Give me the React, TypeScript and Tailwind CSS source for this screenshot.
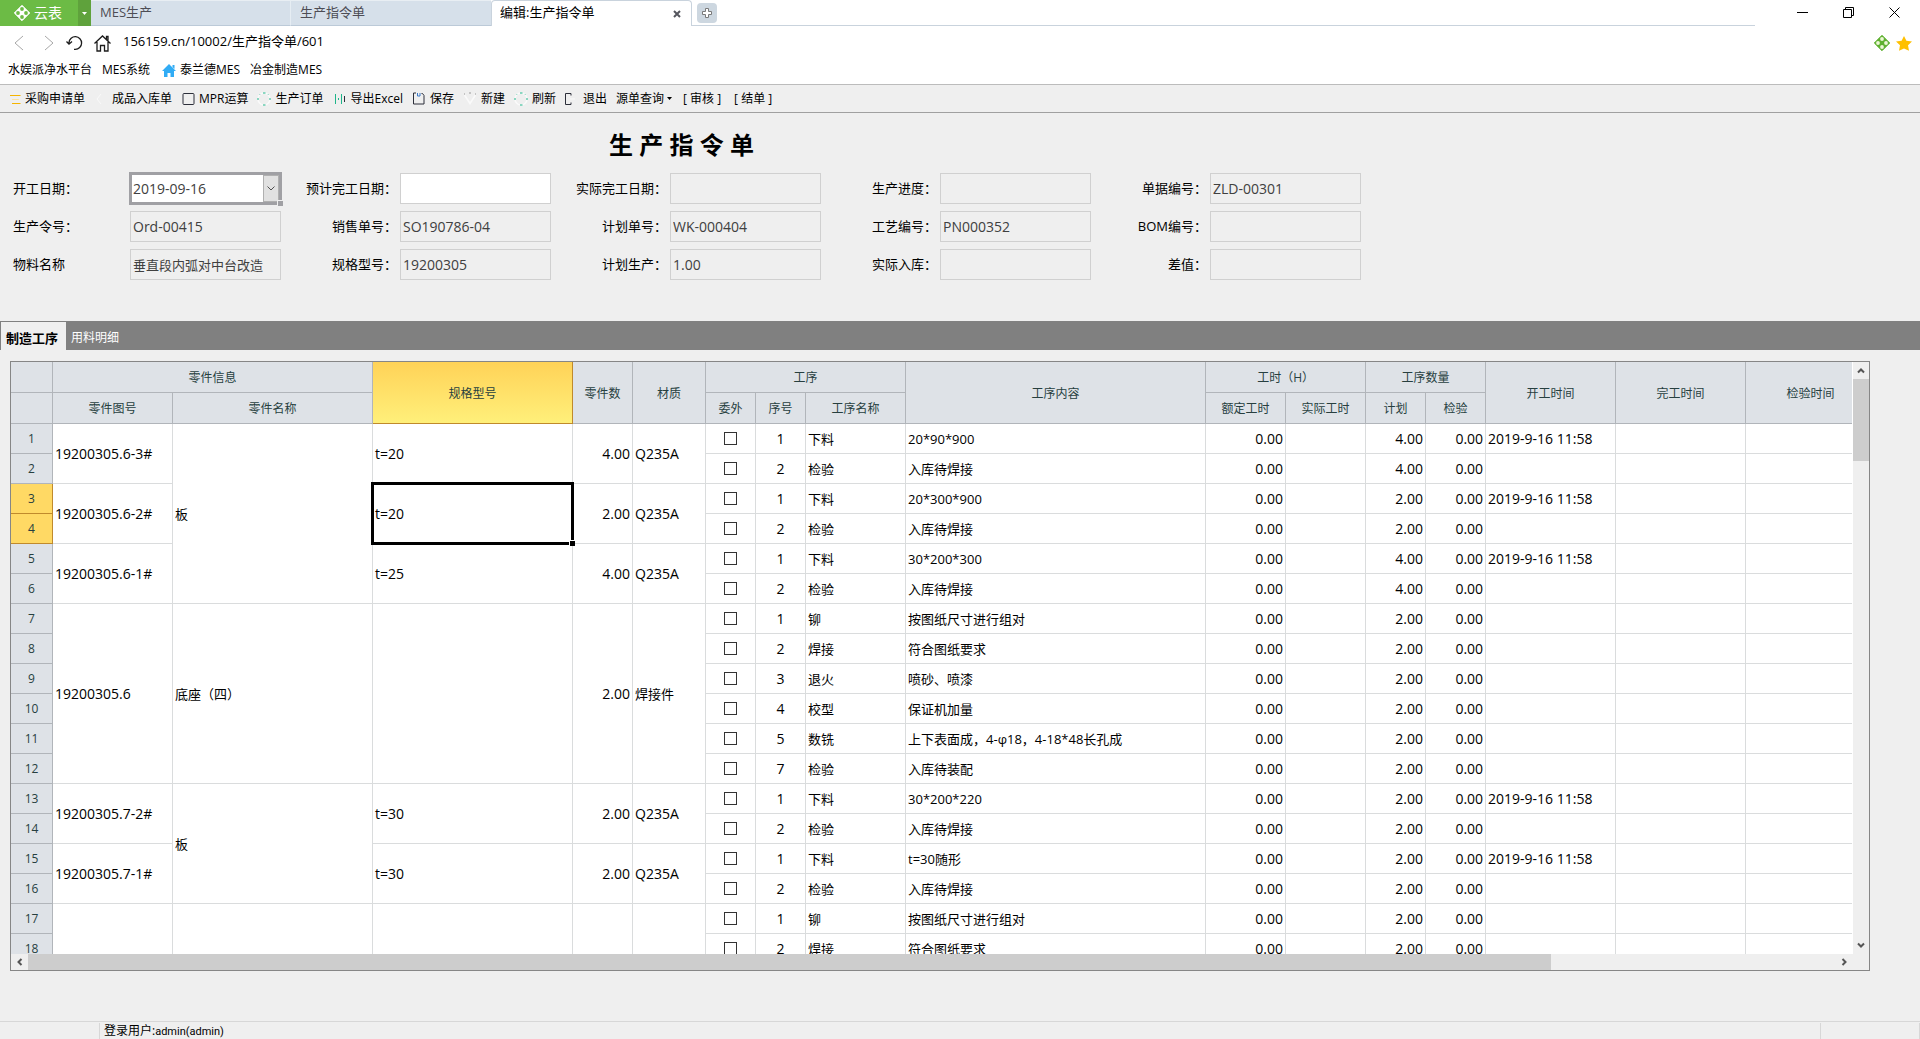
import React from "react";

const FONT = "font-['Open_Sans','Noto_Sans_CJK_SC',sans-serif]";

function Clover({ size, stroke, fill }: { size: number; stroke: string; fill: string }) {
  return (
    <svg width={size} height={size} viewBox="0 0 16 16" aria-hidden="true">
      <path d="M8 0.3 15.7 8 8 15.7 0.3 8Z" fill={stroke} stroke={stroke} strokeLinejoin="round" />
      <circle cx="8" cy="4" r="1.9" fill={fill} />
      <circle cx="4" cy="8" r="1.9" fill={fill} />
      <circle cx="12" cy="8" r="1.9" fill={fill} />
      <circle cx="8" cy="12" r="1.9" fill={fill} />
    </svg>
  );
}

function TabBar() {
  return (
    <header className="flex h-[26px] items-stretch bg-white">
      <button className="flex w-[78px] items-center gap-1 bg-[#6cbb45] pl-3.5 text-[14px] leading-none text-white">
        <Clover size={16} stroke="#ffffff" fill="#6cbb45" />
        云表
      </button>
      <button aria-label="菜单" className="flex w-[13px] items-center justify-center bg-[#5fa23c]">
        <svg width="5" height="3" viewBox="0 0 5 3" aria-hidden="true">
          <path d="M0 0H5L2.5 3Z" fill="#fff" />
        </svg>
      </button>
      <nav className="flex flex-1 items-stretch text-[13px] leading-none">
        <button className="w-[200px] border-r border-t border-b border-r-[#e6edf3] border-t-[#e8eef3] border-b-[#bccad8] bg-[#d6e0ea] pb-0.5 pl-[9px] text-left text-[#4d4d55]">
          MES生产
        </button>
        <button className="w-[200px] border-t border-b border-t-[#e8eef3] border-b-[#bccad8] bg-[#d6e0ea] pb-0.5 pl-[9px] text-left text-[#4d4d55]">
          生产指令单
        </button>
        <div className="flex w-[201px] items-center justify-between rounded-t-sm border-x border-t border-[#c9d3dd] bg-white pl-2 pr-2.5">
          <button className="pb-0.5 text-black">编辑:生产指令单</button>
          <button aria-label="关闭标签">
            <svg width="8" height="8" viewBox="0 0 8 8" aria-hidden="true">
              <path d="M1 1 7 7M7 1 1 7" stroke="#55565e" strokeWidth="2" />
            </svg>
          </button>
        </div>
        <div className="flex w-[1063px] min-w-0 items-center border-b border-[#c9d3dd] pl-[5px]">
          <button aria-label="新建标签" className="flex h-[20px] w-[20px] items-center justify-center rounded-sm bg-[#cdd7e0]">
            <svg width="12" height="12" viewBox="0 0 12 12" aria-hidden="true">
              <path d="M4.5 1.5h3v3h3v3h-3v3h-3v-3h-3v-3h3Z" fill="#fff" stroke="#7a7a7a" />
            </svg>
          </button>
        </div>
      </nav>
      <div className="flex items-center gap-[35px] pb-0.5 pr-5">
        <button aria-label="最小化">
          <svg width="11" height="11" viewBox="0 0 11 11" aria-hidden="true">
            <path d="M0 5.5H11" stroke="#000" />
          </svg>
        </button>
        <button aria-label="还原">
          <svg width="11" height="11" viewBox="0 0 11 11" aria-hidden="true">
            <path d="M0.5 2.5H8.5V10.5H0.5ZM2.5 2.5V0.5H10.5V8.5H8.5" fill="none" stroke="#000" />
          </svg>
        </button>
        <button aria-label="关闭">
          <svg width="11" height="11" viewBox="0 0 11 11" aria-hidden="true">
            <path d="M0.5 0.5 10.5 10.5M10.5 0.5 0.5 10.5" stroke="#000" />
          </svg>
        </button>
      </div>
    </header>
  );
}

function AddressBar() {
  return (
    <div className="flex h-[34px] items-center bg-white pl-3.5 pr-2">
      <div className="flex items-center">
        <button aria-label="后退" className="w-[26px]">
          <svg width="10" height="16" viewBox="0 0 10 16" aria-hidden="true">
            <path d="M9 1 1 8 9 15" fill="none" stroke="#a8a8a8" />
          </svg>
        </button>
        <button aria-label="前进" className="flex w-[26px] pl-1">
          <svg width="10" height="16" viewBox="0 0 10 16" aria-hidden="true">
            <path d="M1 1 9 8 1 15" fill="none" stroke="#a8a8a8" />
          </svg>
        </button>
        <button aria-label="刷新页面" className="w-[28px]">
          <svg width="17" height="16" viewBox="0 0 17 16" aria-hidden="true">
            <path d="M3 8.5V7.5a6.3 6.3 0 1 1 6.3 6.8H8M0.5 6.5 3 9.2 6 6.5" fill="none" stroke="#1c1c1c" strokeWidth="1.3" />
          </svg>
        </button>
        <button aria-label="主页">
          <svg width="17" height="17" viewBox="0 0 17 17" aria-hidden="true">
            <path d="M0.5 8.5 8.5 1l8 7.5M3 7v9h3.5v-5.5h4V16H14V7M12.5 4V1.5h1.5V5.5" fill="none" stroke="#1c1c1c" strokeWidth="1.3" />
          </svg>
        </button>
      </div>
      <input
        aria-label="地址"
        defaultValue="156159.cn/10002/生产指令单/601"
        className="ml-3 min-w-0 flex-1 bg-transparent pb-0.5 text-[13px] text-black outline-none"
      />
      <div className="flex items-center gap-1.5">
        <button aria-label="云表平台">
          <Clover size={16} stroke="#5fb131" fill="#eef7d8" />
        </button>
        <button aria-label="收藏">
          <svg width="16" height="15" viewBox="0 0 16 15" aria-hidden="true">
            <path d="M8 0 10.4 4.8 16 5.5 12 9.3 13 14.8 8 12.4 3 14.8 4 9.3 0 5.5 5.6 4.8Z" fill="#ffc000" />
          </svg>
        </button>
      </div>
    </div>
  );
}

function Bookmarks() {
  return (
    <nav className="flex h-[24px] items-start gap-2.5 bg-white pl-2 text-[12px] leading-5 text-black">
      <a href="#water">水娱派净水平台</a>
      <a href="#mes">MES系统</a>
      <a href="#tld" className="flex items-center gap-1">
        <svg width="16" height="13" viewBox="0 0 16 13" aria-hidden="true">
          <path d="M9 0 16 7H14V13H10.5V9h-3v4H4V7H2Z M12.5 1H14.5V5L12.5 3Z" fill="#31acf5" />
        </svg>
        泰兰德MES
      </a>
      <a href="#yj">冶金制造MES</a>
    </nav>
  );
}

const dashed = (
  <svg width="14" height="14" viewBox="0 0 14 14" aria-hidden="true">
    <circle cx="7" cy="7" r="6" fill="none" stroke="#fafafa" strokeWidth="1.5" />
    <path d="M6 1H8.5M6 13H8.5M1 6V8M13 6V8M2.5 2.8 3 2.3M11 2.3 11.5 2.8" stroke="#1fb58a" />
  </svg>
);

const tools: { label: string; icon?: React.ReactNode }[] = [
  {
    label: "采购申请单",
    icon: (
      <svg width="13" height="12" viewBox="0 0 13 12" aria-hidden="true">
        <path d="M2 2.5H12.5M4 10.5H12.5" stroke="#f5b400" />
        <path d="M4 6.5H11" stroke="#fbe2a0" />
      </svg>
    ),
  },
  {
    label: "成品入库单",
    icon: (
      <svg width="13" height="12" viewBox="0 0 13 12" aria-hidden="true">
        <path d="M6 1 2 6 6 11" fill="none" stroke="#fafafa" />
      </svg>
    ),
  },
  {
    label: "MPR运算",
    icon: (
      <svg width="13" height="12" viewBox="0 0 13 12" aria-hidden="true">
        <rect x="1" y="0.5" width="11" height="11" rx="1" fill="none" stroke="#2c2f3a" />
      </svg>
    ),
  },
  { label: "生产订单", icon: dashed },
  {
    label: "导出Excel",
    icon: (
      <svg width="13" height="12" viewBox="0 0 13 12" aria-hidden="true">
        <path d="M2.5 1V11M8.5 1V11M5.5 5V7" stroke="#1fb58a" />
        <path d="M11.5 3V9" stroke="#2c2f3a" />
      </svg>
    ),
  },
  {
    label: "保存",
    icon: (
      <svg width="13" height="13" viewBox="0 0 13 13" aria-hidden="true">
        <path d="M4 1H1.5V12H12V3.5L10.5 1.5H9.5" fill="none" stroke="#2c2f3a" />
        <path d="M5.5 1V4H8V1" fill="none" stroke="#3a78c8" />
      </svg>
    ),
  },
  {
    label: "新建",
    icon: (
      <svg width="14" height="13" viewBox="0 0 14 13" aria-hidden="true">
        <path d="M1.5 3 7 11.5 12.5 3" fill="none" stroke="#fafafa" strokeWidth="1.5" />
        <path d="M1 2H2M12 2H13M6 1H8" stroke="#999" />
      </svg>
    ),
  },
  { label: "刷新", icon: dashed },
  {
    label: "退出",
    icon: (
      <svg width="13" height="12" viewBox="0 0 13 12" aria-hidden="true">
        <path d="M6 2.5V0.5H0.5V11.5H6V9.5" fill="none" stroke="#2c2f3a" />
        <path d="M5 6H10" stroke="#fafafa" />
      </svg>
    ),
  },
];

function Toolbar() {
  return (
    <div className="flex h-[29px] items-center gap-[9px] border-y border-t-[#bcbcbc] border-b-[#a0a0a0] bg-[#efefef] pl-[7px] text-[12px] leading-none text-black">
      {tools.map((t) => (
        <button key={t.label} className="flex items-center gap-1">
          <span className="flex w-[14px] justify-center">{t.icon}</span>
          {t.label}
        </button>
      ))}
      <button className="flex items-center gap-[3px]">
        源单查询
        <svg width="5" height="3" viewBox="0 0 5 3" aria-hidden="true">
          <path d="M0 0H5L2.5 3Z" fill="#000" />
        </svg>
      </button>
      <button className="px-0.5">[ 审核 ]</button>
      <button className="px-0.5">[ 结单 ]</button>
    </div>
  );
}

type Field = { label: string; value: string; editable?: boolean };

const fields: Field[] = [
  { label: "开工日期：", value: "2019-09-16", editable: true },
  { label: "预计完工日期：", value: "", editable: true },
  { label: "实际完工日期：", value: "" },
  { label: "生产进度：", value: "" },
  { label: "单据编号：", value: "ZLD-00301" },
  { label: "生产令号：", value: "Ord-00415" },
  { label: "销售单号：", value: "SO190786-04" },
  { label: "计划单号：", value: "WK-000404" },
  { label: "工艺编号：", value: "PN000352" },
  { label: "BOM编号：", value: "" },
  { label: "物料名称", value: "垂直段内弧对中台改造" },
  { label: "规格型号：", value: "19200305" },
  { label: "计划生产：", value: "1.00" },
  { label: "实际入库：", value: "" },
  { label: "差值：", value: "" },
];

const isLatin = (s: string) => /^[\x20-\x7e]*$/.test(s);

function OrderForm() {
  return (
    <section>
      <h1 className="w-[1363px] max-w-full pt-4 text-center text-[24px] font-bold leading-8 text-black">生 产 指 令 单</h1>
      <div className="mt-3 grid grid-cols-[repeat(5,270px)] gap-y-[7px] pl-[13px] text-[13px] leading-none">
        {fields.map((f, i) => {
          const first = i % 5 === 0;
          const id = "field" + i;
          return (
            <div key={id} className="flex items-center">
              <label
                htmlFor={id}
                className={first ? "w-[117px] shrink-0 text-black" : "w-[117px] shrink-0 pr-[3px] text-right text-black"}
              >
                {f.label}
              </label>
              {i === 0 ? (
                <div className="relative flex h-[31px] w-[151px] items-stretch bg-white outline-3 -outline-offset-2 outline-[#a0a0a4]">
                  <input id={id} defaultValue={f.value} className="min-w-0 flex-1 pl-[3px] text-[14px] text-[#404040] outline-none" />
                  <button
                    aria-label="选择日期"
                    className="my-0.5 mr-0.5 flex w-4 items-center justify-center border border-[#b0b0b0] bg-[#e1e1e1]"
                  >
                    <svg width="8" height="5" viewBox="0 0 8 5" aria-hidden="true">
                      <path d="M0.5 0.5 4 4 7.5 0.5" fill="none" stroke="#505050" />
                    </svg>
                  </button>
                  <span className="absolute -bottom-0.5 -right-0.5 h-1.5 w-1.5 border-l border-t border-[#efefef] bg-[#a0a0a4]" />
                </div>
              ) : (
                <input
                  id={id}
                  defaultValue={f.value}
                  readOnly={!f.editable}
                  className={
                    "h-[31px] w-[151px] border border-[#d0d0d0] px-0.5 text-[#404040] outline-none " +
                    (f.editable ? "bg-white " : "bg-[#efefef] ") +
                    (isLatin(f.value) ? "text-[14px]" : "text-[13px]")
                  }
                />
              )}
            </div>
          );
        })}
      </div>
    </section>
  );
}

type Part = { span: number; code: string; spec: string; qty: string; material: string; name?: string; nameSpan?: number };

const parts: Record<number, Part> = {
  1: { span: 2, code: "19200305.6-3#", spec: "t=20", qty: "4.00", material: "Q235A", name: "板", nameSpan: 6 },
  3: { span: 2, code: "19200305.6-2#", spec: "t=20", qty: "2.00", material: "Q235A" },
  5: { span: 2, code: "19200305.6-1#", spec: "t=25", qty: "4.00", material: "Q235A" },
  7: { span: 6, code: "19200305.6", spec: "", qty: "2.00", material: "焊接件", name: "底座（四）", nameSpan: 6 },
  13: { span: 2, code: "19200305.7-2#", spec: "t=30", qty: "2.00", material: "Q235A", name: "板", nameSpan: 4 },
  15: { span: 2, code: "19200305.7-1#", spec: "t=30", qty: "2.00", material: "Q235A" },
  17: { span: 2, code: "", spec: "", qty: "", material: "", name: " ", nameSpan: 2 },
};

const steps: [string, string, string, string, string][] = [
  ["1", "下料", "20*90*900", "4.00", "2019-9-16 11:58"],
  ["2", "检验", "入库待焊接", "4.00", ""],
  ["1", "下料", "20*300*900", "2.00", "2019-9-16 11:58"],
  ["2", "检验", "入库待焊接", "2.00", ""],
  ["1", "下料", "30*200*300", "4.00", "2019-9-16 11:58"],
  ["2", "检验", "入库待焊接", "4.00", ""],
  ["1", "铆", "按图纸尺寸进行组对", "2.00", ""],
  ["2", "焊接", "符合图纸要求", "2.00", ""],
  ["3", "退火", "喷砂、喷漆", "2.00", ""],
  ["4", "校型", "保证机加量", "2.00", ""],
  ["5", "数铣", "上下表面成，4-φ18，4-18*48长孔成", "2.00", ""],
  ["7", "检验", "入库待装配", "2.00", ""],
  ["1", "下料", "30*200*220", "2.00", "2019-9-16 11:58"],
  ["2", "检验", "入库待焊接", "2.00", ""],
  ["1", "下料", "t=30随形", "2.00", "2019-9-16 11:58"],
  ["2", "检验", "入库待焊接", "2.00", ""],
  ["1", "铆", "按图纸尺寸进行组对", "2.00", ""],
  ["2", "焊接", "符合图纸要求", "2.00", ""],
];

const columns = [42, 120, 200, 200, 60, 73, 50, 50, 100, 300, 80, 80, 60, 60, 130, 130, 130];

const TH = "border-r border-b border-[#b1b5ba] bg-[#dee2e7] px-0 pb-0 pt-0.5 text-[12px] font-normal text-[#273f3f]";
const ROW = "border-r border-b border-[#b1b5ba] bg-[#dee2e7] p-0 text-[12px] font-normal text-[#273f3f]";
const ROW_ACTIVE = "border-r border-b border-[#c08a2c] bg-[#ffd964] p-0 text-[12px] font-normal text-[#273f3f]";
const TD = "border-r border-b border-[#dadcdd] bg-white px-0.5 pb-0 pt-px text-[13px]";
const LATIN = "border-r border-b border-[#dadcdd] bg-white px-0.5 pb-0 pt-px text-[14px]";

function StepTable() {
  return (
    <table className="w-[1865px] table-fixed border-separate border-spacing-0 leading-none text-black">
      <colgroup>
        {columns.map((w, i) => (
          <col key={i} style={{ width: w }} />
        ))}
      </colgroup>
      <thead>
        <tr className="h-[31px]">
          <th className={TH} />
          <th className={TH} colSpan={2}>零件信息</th>
          <th
            rowSpan={2}
            className="border-r border-b border-[#c08a2c] bg-linear-to-b from-[#ffd257] to-[#fff07a] px-0 pb-0 pt-0.5 text-[12px] font-normal text-[#273f3f]"
          >
            规格型号
          </th>
          <th className={TH} rowSpan={2}>零件数</th>
          <th className={TH} rowSpan={2}>材质</th>
          <th className={TH} colSpan={3}>工序</th>
          <th className={TH} rowSpan={2}>工序内容</th>
          <th className={TH} colSpan={2}>工时（H）</th>
          <th className={TH} colSpan={2}>工序数量</th>
          <th className={TH} rowSpan={2}>开工时间</th>
          <th className={TH} rowSpan={2}>完工时间</th>
          <th className={TH} rowSpan={2}>检验时间</th>
        </tr>
        <tr className="h-[31px]">
          <th className={TH} />
          <th className={TH}>零件图号</th>
          <th className={TH}>零件名称</th>
          <th className={TH}>委外</th>
          <th className={TH}>序号</th>
          <th className={TH}>工序名称</th>
          <th className={TH}>额定工时</th>
          <th className={TH}>实际工时</th>
          <th className={TH}>计划</th>
          <th className={TH}>检验</th>
        </tr>
      </thead>
      <tbody>
        {steps.map((s, i) => {
          const n = i + 1;
          const p = parts[n];
          const active = n === 3 || n === 4;
          return (
            <tr key={n} className="h-[30px]">
              <th className={active ? ROW_ACTIVE : ROW}>{n}</th>
              {p && (
                <td className={LATIN} rowSpan={p.span}>
                  {p.code}
                </td>
              )}
              {p && p.name && (
                <td className={TD} rowSpan={p.nameSpan}>
                  {p.name}
                </td>
              )}
              {p && (
                <>
                  <td className={n === 3 ? LATIN + " relative" : LATIN} rowSpan={p.span}>
                    {p.spec}
                    {n === 3 && (
                      <span className="pointer-events-none absolute -inset-0.5 z-10 border-3 border-black">
                        <span className="absolute -bottom-1 -right-1 h-1.5 w-1.5 border-l border-t border-white bg-black" />
                      </span>
                    )}
                  </td>
                  <td className={LATIN + " text-right"} rowSpan={p.span}>
                    {p.qty}
                  </td>
                  <td className={isLatin(p.material) ? LATIN : TD} rowSpan={p.span}>
                    {p.material}
                  </td>
                </>
              )}
              <td className="border-r border-b border-[#dadcdd] bg-white p-0">
                <input
                  type="checkbox"
                  aria-label={"委外 " + n}
                  className="mx-auto block h-[13px] w-[13px] appearance-none border border-[#333] bg-white checked:bg-[#333]"
                />
              </td>
              <td className={LATIN + " text-center"}>{s[0]}</td>
              <td className={TD}>{s[1]}</td>
              <td className={TD}>{s[2]}</td>
              <td className={LATIN + " text-right"}>0.00</td>
              <td className={TD} />
              <td className={LATIN + " text-right"}>{s[3]}</td>
              <td className={LATIN + " text-right"}>0.00</td>
              <td className={LATIN}>{s[4]}</td>
              <td className={TD} />
              <td className={TD} />
            </tr>
          );
        })}
      </tbody>
    </table>
  );
}

function Chevron({ d }: { d: string }) {
  return (
    <svg width="8" height="8" viewBox="0 0 8 8" aria-hidden="true">
      <path d={d} fill="none" stroke="#555" strokeWidth="2" />
    </svg>
  );
}

function Grid() {
  return (
    <div className="mb-[50px] ml-2.5 mr-[50px] mt-[11px] flex min-h-0 flex-1 flex-col border border-[#868686] bg-[#efefef]">
      <div className="flex min-h-0 flex-1">
        <div className="min-w-0 flex-1 overflow-hidden">
          <StepTable />
        </div>
        <div className="flex w-[17px] flex-col items-stretch border-l border-white">
          <button aria-label="向上滚动" className="flex h-[17px] items-center justify-center">
            <Chevron d="M1 5.5 4 2.5 7 5.5" />
          </button>
          <div className="flex-1">
            <div className="h-[82px] bg-[#cdcdcd]" />
          </div>
          <button aria-label="向下滚动" className="flex h-[17px] items-center justify-center">
            <Chevron d="M1 1.5 4 4.5 7 1.5" />
          </button>
        </div>
      </div>
      <div className="flex h-[16px] pr-[17px]">
        <button aria-label="向左滚动" className="flex w-[17px] items-center justify-center">
          <Chevron d="M5.5 1 2.5 4 5.5 7" />
        </button>
        <div className="flex-1">
          <div className="h-full w-[84.3%] bg-[#cdcdcd]" />
        </div>
        <button aria-label="向右滚动" className="flex w-[17px] items-center justify-center">
          <Chevron d="M2.5 1 5.5 4 2.5 7" />
        </button>
      </div>
    </div>
  );
}

export default function App() {
  return (
    <div className={FONT + " flex h-screen flex-col overflow-hidden bg-[#efefef]"}>
      <TabBar />
      <AddressBar />
      <Bookmarks />
      <Toolbar />
      <OrderForm />
      <div className="mt-[41px] flex h-[29px] shrink-0 items-stretch bg-[#808080] pl-px pt-px leading-none">
        <button className="w-[65px] bg-[#efefef] pl-[5px] pt-1 text-left text-[13px] font-bold text-black">制造工序</button>
        <button className="px-[5px] pt-1 text-[12px] text-white">用料明细</button>
      </div>
      <Grid />
      <footer className="flex h-[18px] shrink-0 items-stretch border-t border-[#d7d7d7] pt-px text-[12px] leading-4 text-black">
        <div className="w-[100px] border-r border-[#d7d7d7]" />
        <div className="flex-1 pl-1">
          登录用户:<span className="font-['Roboto',sans-serif] text-[11px]">admin(admin)</span>
        </div>
        <div className="w-[100px] border-x border-[#d7d7d7]" />
      </footer>
    </div>
  );
}
